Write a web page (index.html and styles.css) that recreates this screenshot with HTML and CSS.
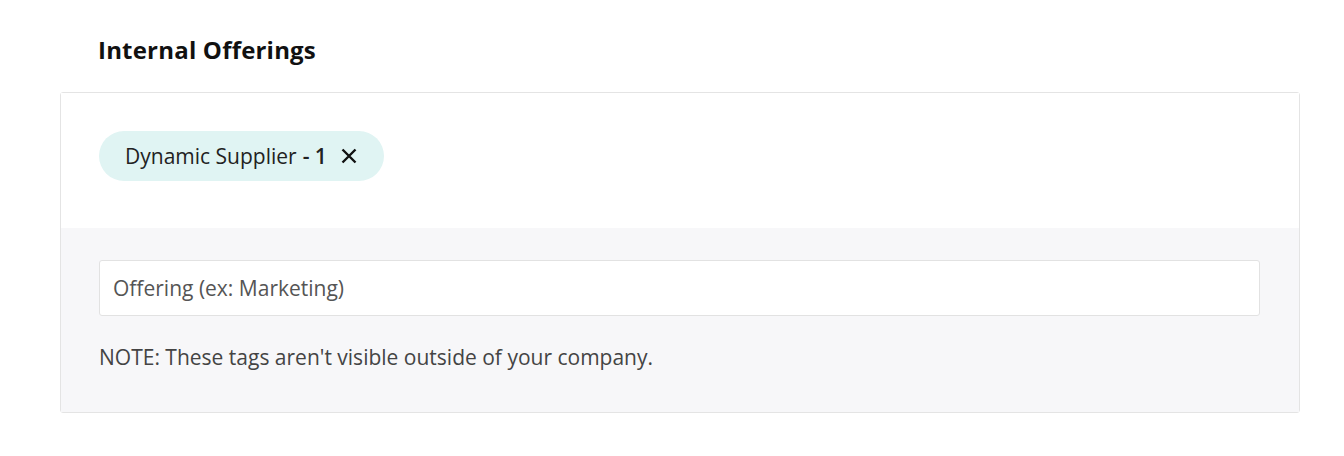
FILE: index.html
```html
<!DOCTYPE html>
<html>
<head>
<meta charset="utf-8">
<link rel="stylesheet" href="styles.css">
</head>
<body>
<div class="page">
  <h2 class="title">Internal Offerings</h2>
  <div class="card">
    <div class="tags">
      <span class="chip">Dynamic Supplier <b>- 1</b>
        <svg class="x" width="16" height="16" viewBox="0 0 16 16"><path d="M1.5 1.5L14.5 14.5M14.5 1.5L1.5 14.5" stroke="#111" stroke-width="2.4"/></svg>
      </span>
    </div>
    <div class="bottom">
      <div class="input">Offering (ex: Marketing)</div>
      <p class="note">NOTE: These tags aren't visible outside of your company.</p>
    </div>
  </div>
</div>
</body>
</html>
```
FILE: styles.css
```css
html, body { margin: 0; padding: 0; background: #fff; }
body { font-family: "Open Sans", sans-serif; color: #222; }
.page { padding: 32px 44px 0 60px; }
.title { margin: 0 0 0 38px; font-size: 24px; font-weight: 700; line-height: 36px; color: #111; letter-spacing: 0.2px; }
.card { margin-top: 24px; border: 1px solid #e4e4e4; border-radius: 3px; width: 1238px; }
.tags { background: #fff; padding: 38px 38px 47px; display: flex; }
.chip { display: inline-flex; align-items: center; height: 50px; padding: 0 27px 0 26px; border-radius: 25px; background: #e0f4f3; font-size: 21px; color: #222; }
.chip b { font-weight: 600; margin-left: 6px; }
.x { margin-left: 14px; }
.bottom { background: #f7f7f9; padding: 32px 39px 40px 38px; }
.input { height: 54px; border: 1px solid #e2e2e2; border-radius: 3px; background: #fff; display: flex; align-items: center; padding: 0 13px; font-size: 21px; color: #555; }
.note { margin: 26px 0 0; font-size: 21px; color: #444; line-height: 30px; }
```
